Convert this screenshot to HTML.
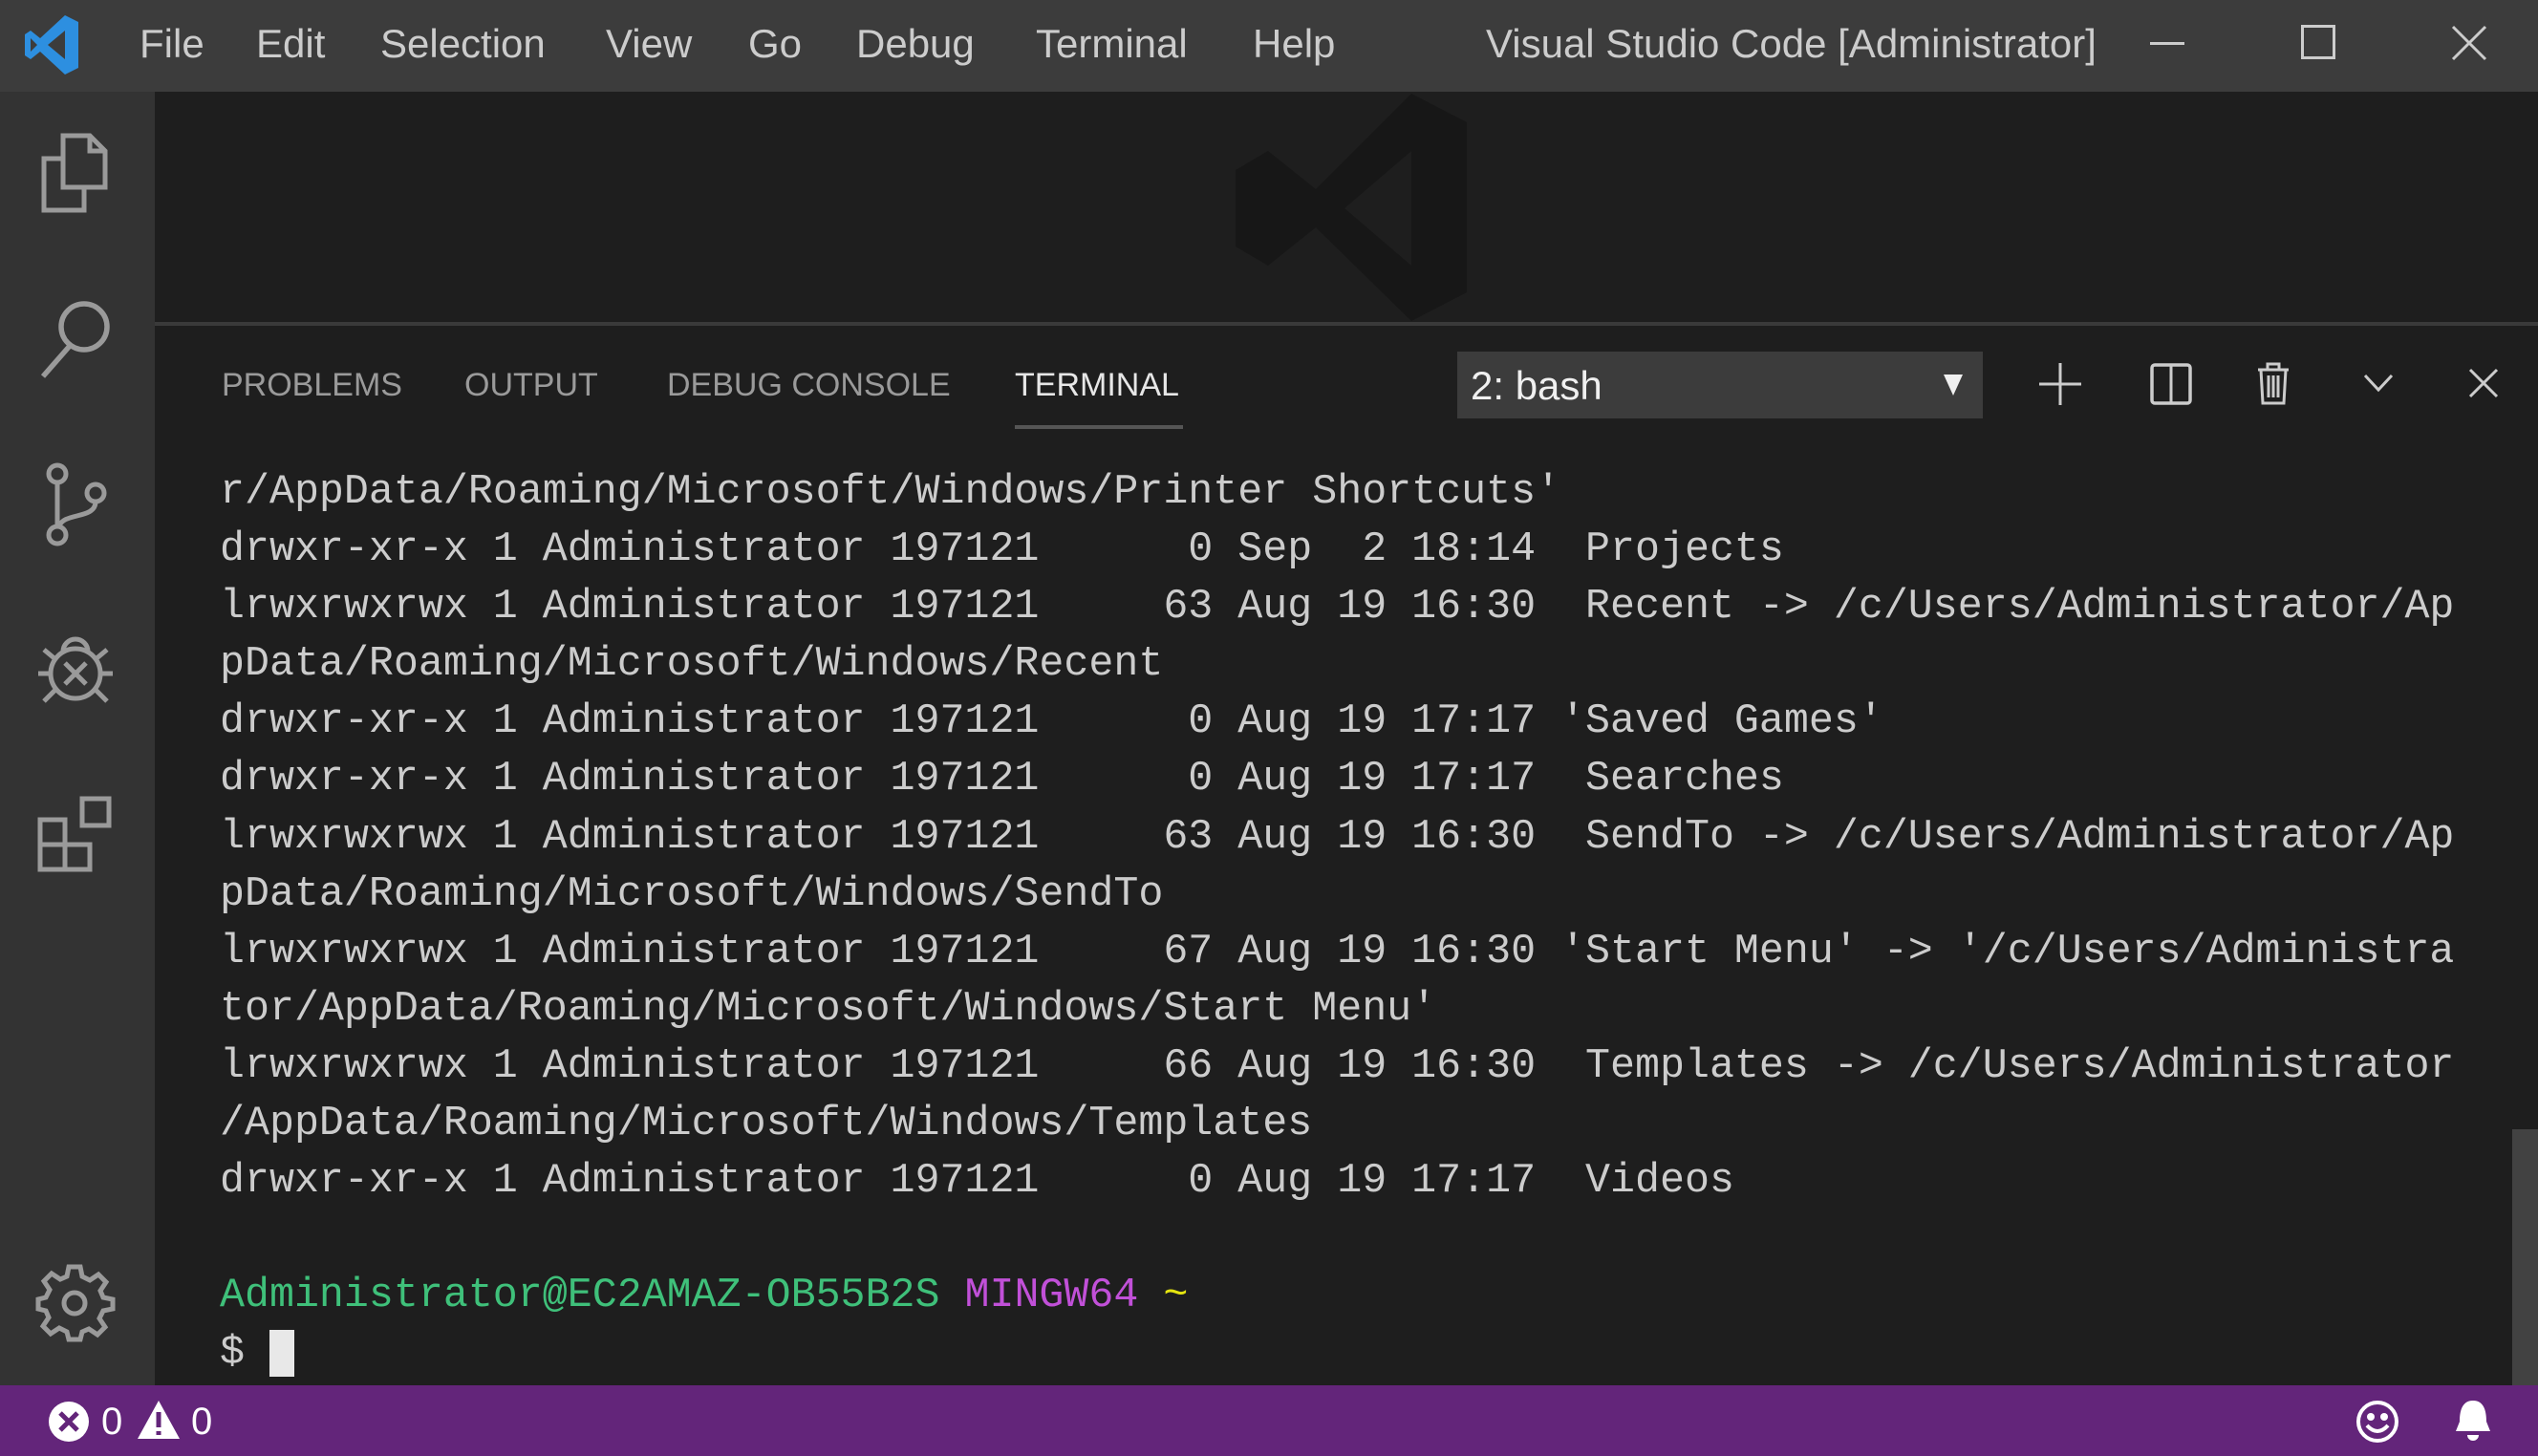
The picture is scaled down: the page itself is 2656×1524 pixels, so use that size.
<!DOCTYPE html>
<html><head><meta charset="utf-8"><style>
*{margin:0;padding:0;box-sizing:border-box}
body{width:2656px;height:1524px;background:#1e1e1e;overflow:hidden;position:relative;font-family:"Liberation Sans",sans-serif}
.a{position:absolute}
#title{left:0;top:0;width:2656px;height:96px;background:#3c3c3c}
.menu{position:absolute;top:20px;font-size:42px;color:#ccc;line-height:52px}
#act{left:0;top:96px;width:162px;height:1354px;background:#333}
#status{left:0;top:1450px;width:2656px;height:74px;background:#63257a;color:#fff}
.tab{position:absolute;top:383px;font-size:34px;color:#9a9a9a;line-height:40px}
.term{position:absolute;left:230px;top:486px;font-family:"Liberation Mono",monospace;font-size:43.3px;line-height:60.1px;color:#ccc;white-space:pre}
svg{position:absolute;overflow:visible}
</style></head><body>
<div id="title" class="a"></div>
<svg style="left:26px;top:14px" width="58" height="66" viewBox="0 0 58 66"><path d="M42 2 L56 9 V57 L42 64 L16 40 L6 48 L0 44 V22 L6 18 L16 26 Z M42 18 L24 33 L42 48 Z M6 26 V40 L13 33 Z" fill="#2d8fe0" fill-rule="evenodd"/></svg>
<div class="menu" style="left:146px">File</div>
<div class="menu" style="left:268px">Edit</div>
<div class="menu" style="left:398px">Selection</div>
<div class="menu" style="left:634px">View</div>
<div class="menu" style="left:783px">Go</div>
<div class="menu" style="left:896px">Debug</div>
<div class="menu" style="left:1084px">Terminal</div>
<div class="menu" style="left:1311px">Help</div>
<div class="menu" style="left:1555px">Visual Studio Code [Administrator]</div>
<svg style="left:2250px;top:44px" width="36" height="4"><rect width="36" height="3" fill="#ccc"/></svg>
<svg style="left:2408px;top:26px" width="36" height="36"><rect x="1.5" y="1.5" width="33" height="33" fill="none" stroke="#ccc" stroke-width="3"/></svg>
<svg style="left:2565px;top:26px" width="38" height="38"><path d="M2 2 L36 36 M36 2 L2 36" stroke="#ccc" stroke-width="3"/></svg>

<div id="act" class="a"></div>
<svg style="left:40px;top:138px" width="76" height="86" viewBox="0 0 76 86" fill="none" stroke="#9a9a9a" stroke-width="5"><path d="M26 4 H54 L70 20 V58 H26 Z M54 4 V20 H70"/><path d="M26 28 H6 V82 H48 V58"/></svg>
<svg style="left:40px;top:312px" width="80" height="84" viewBox="0 0 80 84" fill="none" stroke="#9a9a9a" stroke-width="5.5"><circle cx="48" cy="30" r="24"/><path d="M33 50 L5 82"/></svg>
<svg style="left:46px;top:484px" width="68" height="88" viewBox="0 0 68 88" fill="none" stroke="#9a9a9a" stroke-width="5"><circle cx="14" cy="12" r="9"/><circle cx="14" cy="76" r="9"/><circle cx="54" cy="32" r="9"/><path d="M14 21 V67 M54 41 C54 60 20 52 16 67"/></svg>
<svg style="left:38px;top:660px" width="82" height="82" viewBox="0 0 82 82" fill="none" stroke="#9a9a9a" stroke-width="5"><circle cx="41" cy="45" r="26"/><path d="M28 22 A13 13 0 0 1 54 22 M2 45 H15 M67 45 H80 M8 20 L20 30 M74 20 L62 30 M8 74 L20 62 M74 74 L62 62 M30 34 L52 56 M52 34 L30 56"/></svg>
<svg style="left:38px;top:832px" width="84" height="84" viewBox="0 0 84 84" fill="none" stroke="#9a9a9a" stroke-width="5"><rect x="4" y="26" width="26" height="26"/><rect x="4" y="52" width="26" height="26"/><rect x="30" y="52" width="26" height="26"/><rect x="48" y="4" width="28" height="28"/></svg>
<svg style="left:38px;top:1324px" width="80" height="80" viewBox="0 0 80 80" fill="none" stroke="#9a9a9a" stroke-width="5"><circle cx="40" cy="40" r="11"/><path d="M34 4 H46 L48 14 L56 18 L65 12 L73 20 L67 29 L70 36 L80 38 V48 L70 50 L66 58 L72 67 L64 75 L55 69 L48 72 L46 80 H34 L32 72 L24 68 L15 74 L7 66 L13 57 L10 50 L2 48 V38 L10 36 L14 28 L8 19 L16 11 L25 17 L32 14 Z" transform="translate(0,-2)"/></svg>

<svg style="left:1287px;top:98px" width="248" height="238" viewBox="0 0 248 238"><path d="M190 0 L248 30 V208 L190 238 L90 140 L40 180 L6 160 V80 L40 60 L90 100 Z M190 60 L120 120 L190 180 Z" fill="#171717" fill-rule="evenodd"/></svg>

<div class="a" style="left:162px;top:337px;width:2494px;height:4px;background:#3a3a3a"></div>
<div class="tab" style="left:232px">PROBLEMS</div>
<div class="tab" style="left:486px">OUTPUT</div>
<div class="tab" style="left:698px">DEBUG CONSOLE</div>
<div class="tab" style="left:1062px;color:#e7e7e7">TERMINAL</div>
<div class="a" style="left:1062px;top:445px;width:176px;height:4px;background:#555"></div>
<div class="a" style="left:1525px;top:368px;width:550px;height:70px;background:#3c3c3c"></div>
<div class="a" style="left:1539px;top:381px;font-size:42px;color:#f0f0f0;line-height:46px">2: bash</div>
<svg style="left:2034px;top:392px" width="20" height="22"><path d="M0 0 H20 L10 22 Z" fill="#f0f0f0"/></svg>
<svg style="left:2134px;top:380px" width="44" height="44"><path d="M22 0 V44 M0 22 H44" stroke="#ccc" stroke-width="3"/></svg>
<svg style="left:2250px;top:380px" width="44" height="44"><rect x="2" y="2" width="40" height="40" rx="3" fill="none" stroke="#ccc" stroke-width="3.5"/><path d="M22 2 V42" stroke="#ccc" stroke-width="3"/></svg>
<svg style="left:2362px;top:378px" width="34" height="46"><path d="M1 9 H33 M11 9 V3 H23 V9 M4 9 L6 44 H28 L30 9 M12 15 V38 M17 15 V38 M22 15 V38" fill="none" stroke="#ccc" stroke-width="3"/></svg>
<svg style="left:2474px;top:392px" width="30" height="18"><path d="M1 1 L15 16 L29 1" fill="none" stroke="#ccc" stroke-width="3"/></svg>
<svg style="left:2584px;top:386px" width="30" height="30"><path d="M1 1 L29 29 M29 1 L1 29" stroke="#ccc" stroke-width="3"/></svg>

<div class="term">r/AppData/Roaming/Microsoft/Windows/Printer Shortcuts'
drwxr-xr-x 1 Administrator 197121      0 Sep  2 18:14  Projects
lrwxrwxrwx 1 Administrator 197121     63 Aug 19 16:30  Recent -> /c/Users/Administrator/Ap
pData/Roaming/Microsoft/Windows/Recent
drwxr-xr-x 1 Administrator 197121      0 Aug 19 17:17 'Saved Games'
drwxr-xr-x 1 Administrator 197121      0 Aug 19 17:17  Searches
lrwxrwxrwx 1 Administrator 197121     63 Aug 19 16:30  SendTo -> /c/Users/Administrator/Ap
pData/Roaming/Microsoft/Windows/SendTo
lrwxrwxrwx 1 Administrator 197121     67 Aug 19 16:30 'Start Menu' -> '/c/Users/Administra
tor/AppData/Roaming/Microsoft/Windows/Start Menu'
lrwxrwxrwx 1 Administrator 197121     66 Aug 19 16:30  Templates -> /c/Users/Administrator
/AppData/Roaming/Microsoft/Windows/Templates
drwxr-xr-x 1 Administrator 197121      0 Aug 19 17:17  Videos

<span style="color:#3fc07a">Administrator@EC2AMAZ-OB55B2S</span> <span style="color:#c150d8">MINGW64</span> <span style="color:#e5e510">~</span>
$ <span style="background:#e8e8e8"> </span></div>
<div class="a" style="left:2629px;top:1182px;width:27px;height:268px;background:#424242"></div>

<div id="status" class="a"></div>
<svg style="left:50px;top:1466px" width="44" height="44"><circle cx="22" cy="22" r="21" fill="#fff"/><path d="M13 13 L31 31 M31 13 L13 31" stroke="#63257a" stroke-width="5"/></svg>
<div class="a" style="left:106px;top:1465px;font-size:40px;color:#fff;line-height:46px">0</div>
<svg style="left:144px;top:1466px" width="44" height="40"><path d="M22 0 L44 40 H0 Z" fill="#fff"/><path d="M22 12 V28 M22 32 V36" stroke="#63257a" stroke-width="5"/></svg>
<div class="a" style="left:200px;top:1465px;font-size:40px;color:#fff;line-height:46px">0</div>
<svg style="left:2466px;top:1466px" width="44" height="44"><circle cx="22" cy="22" r="20" fill="none" stroke="#fff" stroke-width="4"/><circle cx="15" cy="17" r="4" fill="#fff"/><circle cx="29" cy="17" r="4" fill="#fff"/><path d="M11 26 Q22 38 33 26" fill="none" stroke="#fff" stroke-width="4"/></svg>
<svg style="left:2568px;top:1464px" width="40" height="46"><path d="M20 2 C8 2 6 14 6 24 L2 34 H38 L34 24 C34 14 32 2 20 2 Z M14 38 A6 6 0 0 0 26 38" fill="#fff"/></svg>
</body></html>
